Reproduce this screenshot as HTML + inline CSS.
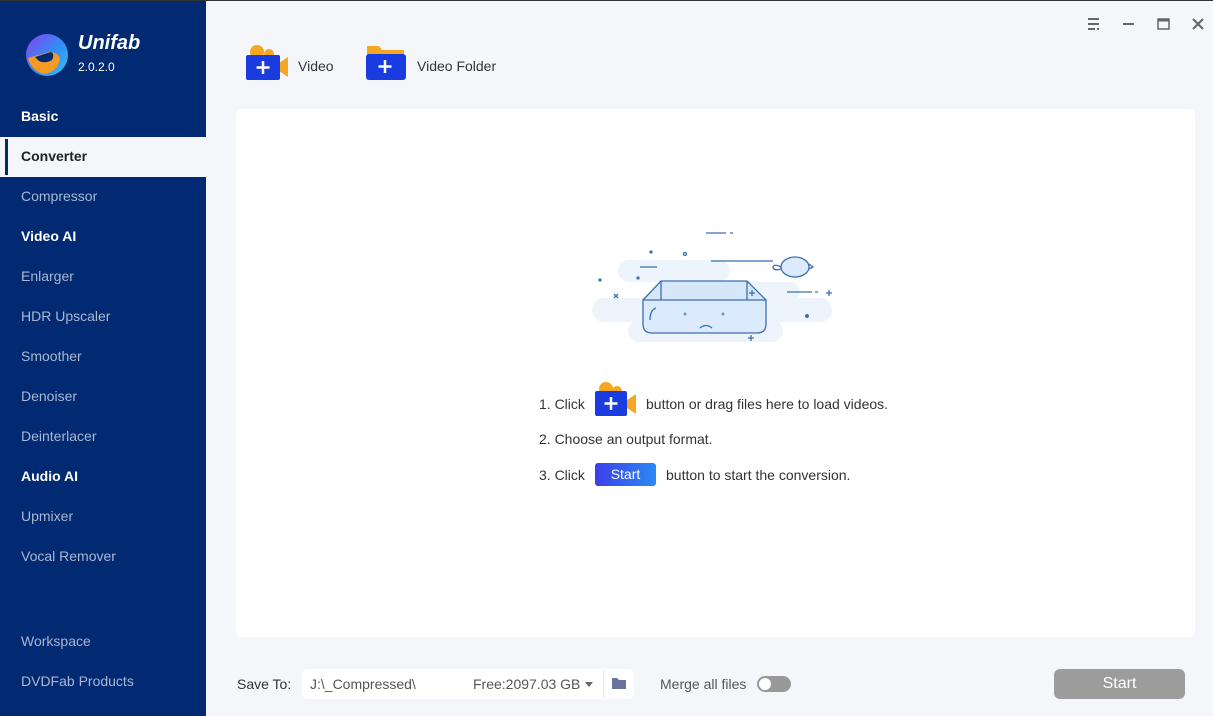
<!DOCTYPE html>
<html><head><style>
*{margin:0;padding:0;box-sizing:border-box}
body{width:1213px;height:716px;overflow:hidden;font-family:"Liberation Sans",sans-serif;background:#f5f6fa;position:relative}
.sb{position:absolute;left:0;top:0;width:206px;height:716px;background:#012a73}
.it{position:absolute;left:21px;font-size:14px;color:#aab6d2;line-height:16px}
.hd{color:#fff;font-weight:bold}
.act{position:absolute;left:0;top:137px;width:206px;height:40px;background:#f5f6fa}
.act:before{content:"";position:absolute;left:5px;top:2px;width:3px;height:36px;background:#012a73}
.card{position:absolute;left:236px;top:109px;width:959px;height:528px;background:#fff;border-radius:6px}
.t{position:absolute;font-size:14px;color:#333;line-height:16px}
.ico{position:absolute}
</style></head><body>
<div style="position:absolute;left:0;top:0;width:1213px;height:1px;background:#333;z-index:5"></div>
<div class="sb">
<svg style="position:absolute;left:25px;top:33px" width="44" height="44" viewBox="0 0 44 44"><defs><linearGradient id="g" x1="0" y1="0" x2="1" y2="1"><stop offset="0" stop-color="#8a3ff0"/><stop offset=".55" stop-color="#2f8ff5"/><stop offset="1" stop-color="#3cc0f0"/></linearGradient></defs><circle cx="22" cy="22" r="21" fill="url(#g)"/><path d="M3 25 L24 19 Q33 19 35 26 Q32 40 18 41 Q6 37 3 25Z" fill="#f59a23"/><path d="M10 24 L26 19 Q30 21 27 27 Q20 31 14 28Z" fill="#012a73"/></svg>
<div style="position:absolute;left:78px;top:32px;color:#fff;font-weight:bold;font-style:italic;font-size:20px">Unifab</div>
<div style="position:absolute;left:78px;top:60px;color:#fff;font-size:12px">2.0.2.0</div>
<div class="act"></div>
<div class="it hd" style="top:108px">Basic</div>
<div class="it hd" style="top:148px;color:#222">Converter</div>
<div class="it" style="top:188px">Compressor</div>
<div class="it hd" style="top:228px">Video AI</div>
<div class="it" style="top:268px">Enlarger</div>
<div class="it" style="top:308px">HDR Upscaler</div>
<div class="it" style="top:348px">Smoother</div>
<div class="it" style="top:388px">Denoiser</div>
<div class="it" style="top:428px">Deinterlacer</div>
<div class="it hd" style="top:468px">Audio AI</div>
<div class="it" style="top:508px">Upmixer</div>
<div class="it" style="top:548px">Vocal Remover</div>
<div class="it" style="top:633px">Workspace</div>
<div class="it" style="top:673px">DVDFab Products</div>
</div>
<svg class="ico" style="left:1085px;top:15px" width="120" height="18"><g stroke="#666" stroke-width="2" fill="none"><path d="M3 4h11M3 9h11M3 14h7M12 14h2"/><path d="M38 9h11"/><rect x="73" y="4" width="11" height="10" stroke-width="1.5"/><path d="M73 5h11" stroke-width="3"/><path d="M108 4l10 10M118 4l-10 10"/></g></svg>
<svg class="ico" style="left:245px;top:44px" width="45" height="37"><circle cx="12" cy="8" r="7" fill="#f5a623"/><circle cx="24" cy="10" r="5" fill="#f5a623"/><path d="M34 19l9-6v20l-9-6z" fill="#f5a623"/><rect x="1" y="11" width="34" height="25" rx="2" fill="#1a3be0"/><path d="M18 17v13M11.5 23.5h13" stroke="#fff" stroke-width="2.5"/></svg>
<div class="t" style="left:298px;top:58px">Video</div>
<svg class="ico" style="left:365px;top:44px" width="42" height="37"><path d="M2 2h12l3 4h22v6H2z" fill="#f5a623"/><rect x="1" y="10" width="40" height="26" rx="3" fill="#1a3be0"/><path d="M20 16v13M13.5 22.5h13" stroke="#fff" stroke-width="2.5"/></svg>
<div class="t" style="left:417px;top:58px">Video Folder</div>
<div class="card"></div>
<svg class="ico" style="left:580px;top:220px" width="280" height="130" fill="none" stroke="#3a6fb0" stroke-width="1.3">
<g fill="#eef4fc" stroke="none"><rect x="38" y="40" width="112" height="22" rx="11"/><rect x="12" y="78" width="240" height="24" rx="12"/><rect x="48" y="100" width="155" height="22" rx="11"/><rect x="130" y="62" width="90" height="20" rx="10"/></g>
<path d="M126 13h20M150 13h3M60 47h17M131 41h62M207 72h25M235 72h3"/>
<path d="M63 80l18-19h86l19 19" fill="#d7e7fa"/>
<path d="M63 80h123v24q0 9-9 9H72q-9 0-9-9z" fill="#dbeafc"/>
<path d="M81 61v19M167 61v19"/>
<path d="M70 100q0-10 6-12"/><path d="M120 108q6-5 12 0"/>
<circle cx="105" cy="94" r="1.5" fill="#6a9ad0" stroke="none"/><circle cx="143" cy="94" r="1.5" fill="#6a9ad0" stroke="none"/>
<circle cx="105" cy="34" r="1.5"/>
<ellipse cx="215" cy="47" rx="14" ry="10" fill="#dbeafc"/><path d="M201 47q-8-4-8 1q2 3 8 1M229 44l4 3-4 2"/>
<path d="M34 74l4 4M38 74l-4 4M172 70v6M169 73h6M249 70v6M246 73h6M171 115v6M168 118h6"/>
<circle cx="71" cy="32" r="1" fill="#3a6fb0"/><circle cx="227" cy="96" r="1.3" fill="#3a6fb0"/><circle cx="20" cy="60" r="1" fill="#3a6fb0"/><circle cx="58" cy="58" r="1" fill="#3a6fb0"/>
</svg>
<div class="t" style="left:539px;top:396px">1. Click</div>
<svg class="ico" style="left:594px;top:381px" width="43" height="36"><circle cx="12" cy="8" r="7" fill="#f5a623"/><circle cx="23" cy="10" r="5" fill="#f5a623"/><path d="M33 19l9-6v20l-9-6z" fill="#f5a623"/><rect x="1" y="10" width="32" height="25" rx="2" fill="#1a3be0"/><path d="M17 16v13M10.5 22.5h13" stroke="#fff" stroke-width="2.5"/></svg>
<div class="t" style="left:646px;top:396px">button or drag files here to load videos.</div>
<div class="t" style="left:539px;top:431px">2. Choose an output format.</div>
<div class="t" style="left:539px;top:467px">3. Click</div>
<div style="position:absolute;left:595px;top:463px;width:61px;height:23px;border-radius:3px;background:linear-gradient(90deg,#3d3ee8,#2a8af5);color:#fff;font-size:14px;text-align:center;line-height:23px">Start</div>
<div class="t" style="left:666px;top:467px">button to start the conversion.</div>
<div class="t" style="left:237px;top:676px">Save To:</div>
<div style="position:absolute;left:302px;top:669px;width:332px;height:30px;background:#fff;border-radius:6px"></div>
<div style="position:absolute;left:603px;top:670px;width:1px;height:28px;background:#e6e6e6"></div>
<div class="t" style="left:310px;top:676px;color:#555">J:\_Compressed\</div>
<div class="t" style="left:473px;top:676px;color:#555">Free:2097.03 GB</div>
<div style="position:absolute;left:585px;top:682px;border:4px solid transparent;border-top:5px solid #666"></div>
<svg class="ico" style="left:612px;top:677px" width="15" height="13"><path d="M0 1h5l2 2h7v9H0z" fill="#6a7399"/></svg>
<div class="t" style="left:660px;top:676px;color:#555">Merge all files</div>
<div style="position:absolute;left:757px;top:676px;width:34px;height:16px;border-radius:8px;background:#999"><div style="position:absolute;left:2px;top:2px;width:12px;height:12px;border-radius:6px;background:#fff"></div></div>
<div style="position:absolute;left:1054px;top:669px;width:131px;height:30px;border-radius:6px;background:#9c9c9c;color:#fff;font-size:16px;text-align:center;line-height:30px">Start</div>
</body></html>
